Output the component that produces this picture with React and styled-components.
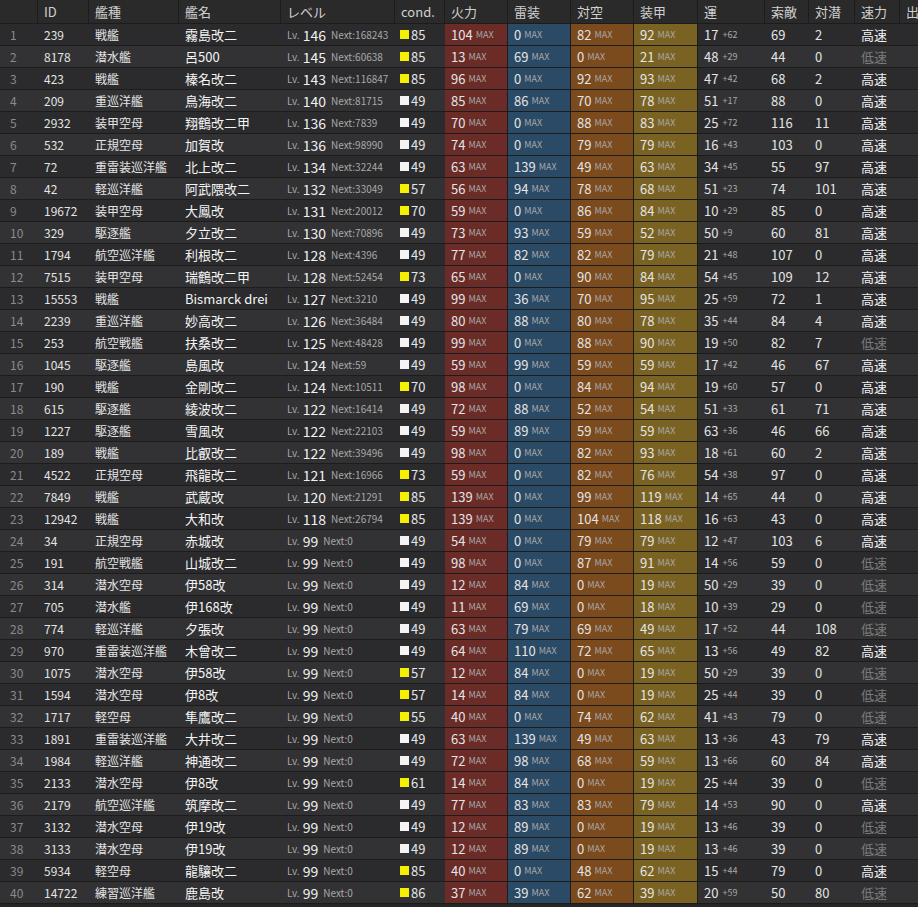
import React from "react";
import styled, { createGlobalStyle } from "styled-components";

const Global = createGlobalStyle`
  body { margin: 0; background: #262626; font-family: "Noto Sans CJK JP", "Noto Sans", sans-serif; }
`;

const COLS = "38px 51px 90px 102px 114px 50px 63px 63px 63px 64px 67px 44px 46px 45px 40px";

// no id type name lv next cond fire torp aa armor luck luck+ los asw fast
const RAW = `239,戦艦,霧島改二,146,168243,85,104,0,82,92,17,62,69,2,1
8178,潜水艦,呂500,145,60638,85,13,69,0,21,48,29,44,0,0
423,戦艦,榛名改二,143,116847,85,96,0,92,93,47,42,68,2,1
209,重巡洋艦,鳥海改二,140,81715,49,85,86,70,78,51,17,88,0,1
2932,装甲空母,翔鶴改二甲,136,7839,49,70,0,88,83,25,72,116,11,1
532,正規空母,加賀改,136,98990,49,74,0,79,79,16,43,103,0,1
72,重雷装巡洋艦,北上改二,134,32244,49,63,139,49,63,34,45,55,97,1
42,軽巡洋艦,阿武隈改二,132,33049,57,56,94,78,68,51,23,74,101,1
19672,装甲空母,大鳳改,131,20012,70,59,0,86,84,10,29,85,0,1
329,駆逐艦,夕立改二,130,70896,49,73,93,59,52,50,9,60,81,1
1794,航空巡洋艦,利根改二,128,4396,49,77,82,82,79,21,48,107,0,1
7515,装甲空母,瑞鶴改二甲,128,52454,73,65,0,90,84,54,45,109,12,1
15553,戦艦,Bismarck drei,127,3210,49,99,36,70,95,25,59,72,1,1
2239,重巡洋艦,妙高改二,126,36484,49,80,88,80,78,35,44,84,4,1
253,航空戦艦,扶桑改二,125,48428,49,99,0,88,90,19,50,82,7,0
1045,駆逐艦,島風改,124,59,49,59,99,59,59,17,42,46,67,1
190,戦艦,金剛改二,124,10511,70,98,0,84,94,19,60,57,0,1
615,駆逐艦,綾波改二,122,16414,49,72,88,52,54,51,33,61,71,1
1227,駆逐艦,雪風改,122,22103,49,59,89,59,59,63,36,46,66,1
189,戦艦,比叡改二,122,39496,49,98,0,82,93,18,61,60,2,1
4522,正規空母,飛龍改二,121,16966,73,59,0,82,76,54,38,97,0,1
7849,戦艦,武蔵改,120,21291,85,139,0,99,119,14,65,44,0,1
12942,戦艦,大和改,118,26794,85,139,0,104,118,16,63,43,0,1
34,正規空母,赤城改,99,0,49,54,0,79,79,12,47,103,6,1
191,航空戦艦,山城改二,99,0,49,98,0,87,91,14,56,59,0,0
314,潜水空母,伊58改,99,0,49,12,84,0,19,50,29,39,0,0
705,潜水艦,伊168改,99,0,49,11,69,0,18,10,39,29,0,0
774,軽巡洋艦,夕張改,99,0,49,63,79,69,49,17,52,44,108,0
970,重雷装巡洋艦,木曾改二,99,0,49,64,110,72,65,13,56,49,82,1
1075,潜水空母,伊58改,99,0,57,12,84,0,19,50,29,39,0,0
1594,潜水空母,伊8改,99,0,57,14,84,0,19,25,44,39,0,0
1717,軽空母,隼鷹改二,99,0,55,40,0,74,62,41,43,79,0,0
1891,重雷装巡洋艦,大井改二,99,0,49,63,139,49,63,13,36,43,79,1
1984,軽巡洋艦,神通改二,99,0,49,72,98,68,59,13,66,60,84,1
2133,潜水空母,伊8改,99,0,61,14,84,0,19,25,44,39,0,0
2179,航空巡洋艦,筑摩改二,99,0,49,77,83,83,79,14,53,90,0,1
3132,潜水空母,伊19改,99,0,49,12,89,0,19,13,46,39,0,0
3133,潜水空母,伊19改,99,0,49,12,89,0,19,13,46,39,0,0
5934,軽空母,龍驤改二,99,0,85,40,0,48,62,15,44,79,0,1
14722,練習巡洋艦,鹿島改,99,0,86,37,39,62,39,20,59,50,80,0`;

const rows = RAW.split("\n").map((l) => l.split(","));

const Table = styled.div`
  width: 918px;
  height: 907px;
  overflow: hidden;
  background: #262626;
`;
const Row = styled.div`
  display: grid;
  grid-template-columns: ${COLS};
  height: ${(p) => (p.$head ? "24px" : "22px")};
  background: ${(p) => (p.$head ? "#2a2a2a" : p.$odd ? "#2b2b2d" : "#323234")};
  border-bottom: 1px solid #1c1c1c;
  box-sizing: border-box;
`;
const Th = styled.div`
  display: flex;
  align-items: center;
  padding-left: 6px;
  color: #d0d0d0;
  font-size: 13px;
  border-right: 1px solid #1c1c1c;
  white-space: nowrap;
  overflow: hidden;
`;
const Td = styled.div`
  display: flex;
  align-items: center;
  padding-left: ${(p) => p.$pad || 6}px;
  color: ${(p) => p.$color || "#e4e4e4"};
  background: ${(p) => p.$bg || "transparent"};
  font-size: ${(p) => p.$size || 12}px;
  border-right: 1px solid ${(p) => (p.$bg ? "#1c1c1c" : "transparent")};
  white-space: nowrap;
  overflow: hidden;
`;
const Small = styled.span`
  font-size: 9px;
  color: #a8a8a8;
  margin-left: ${(p) => p.$ml || 3}px;
`;
const Lv = styled.span`
  font-size: 14px;
  color: #f0f0f0;
  margin: 0 5px 0 3px;
`;
const Sq = styled.span`
  width: 9px;
  height: 9px;
  background: ${(p) => p.$c};
  margin-right: 2px;
`;

const STAT = ["#6b2b27", "#2b4a66", "#7b4a1d", "#7a6322"];

export default function App() {
  const heads = ["", "ID", "艦種", "艦名", "レベル", "cond.", "火力", "雷装", "対空", "装甲", "運", "索敵", "対潜", "速力", "出"];
  return (
    <Table>
      <Global />
      <Row $head>
        {heads.map((h, i) => (
          <Th key={i}>{h}</Th>
        ))}
      </Row>
      {rows.map((r, i) => {
        const cond = +r[5];
        return (
          <Row key={i} $odd={i % 2 === 0}>
            <Td $color="#8a8a8a" $pad={10}>{i + 1}</Td>
            <Td>{r[0]}</Td>
            <Td>{r[1]}</Td>
            <Td $size={13} $color="#f4f4f4">{r[2]}</Td>
            <Td $size={10} $color="#a8a8a8">
              Lv.<Lv>{r[3]}</Lv>Next:{r[4]}
            </Td>
            <Td $size={13} $pad={5}>
              <Sq $c={cond >= 50 ? "#f4f000" : "#f4f4f4"} />
              {r[5]}
            </Td>
            {[6, 7, 8, 9].map((k, j) => (
              <Td key={k} $bg={STAT[j]} $size={13}>
                {r[k]}
                <Small>MAX</Small>
              </Td>
            ))}
            <Td $size={13}>
              {r[10]}
              <Small $ml={4}>+{r[11]}</Small>
            </Td>
            <Td $size={13}>{r[12]}</Td>
            <Td $size={13}>{r[13]}</Td>
            <Td $size={13} $color={r[14] === "1" ? "#f0f0f0" : "#7a7a7a"}>
              {r[14] === "1" ? "高速" : "低速"}
            </Td>
            <Td />
          </Row>
        );
      })}
    </Table>
  );
}
